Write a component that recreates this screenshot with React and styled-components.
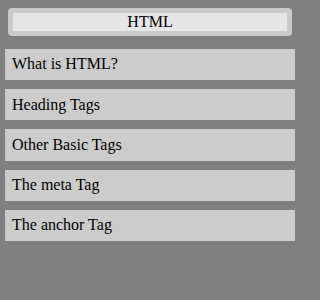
import React from 'react';
import styled, { createGlobalStyle } from 'styled-components';

const GlobalStyle = createGlobalStyle`
  html, body {
    margin: 0;
    padding: 0;
    background: #808080;
  }
  body {
    font-family: 'Liberation Serif', 'Times New Roman', serif;
    font-size: 16px;
  }
`;

const topics = [
  'What is HTML?',
  'Heading Tags',
  'Other Basic Tags',
  'The meta Tag',
  'The anchor Tag',
];

const App = () => (
  <>
    <GlobalStyle />
    <Page>
      <Title>HTML</Title>
      <TopicList>
        {topics.map(topic => (
          <Topic key={topic}>{topic}</Topic>
        ))}
      </TopicList>
    </Page>
  </>
);

export default App;

const Page = styled.div`
  width: 300px;
  height: 300px;
  box-sizing: border-box;
  padding: 8px 5px;
  background: #808080;
`;

const Title = styled.div`
  margin: 0 3px;
  border: 5px solid #cbcbcb;
  border-radius: 4px;
  background: #e6e6e6;
  color: #000;
  text-align: center;
  line-height: 18.4px;
`;

const TopicList = styled.div`
  display: flex;
  flex-direction: column;
  gap: 9px;
  margin-top: 12.6px;
`;

const Topic = styled.div`
  padding: 6.4px 7px;
  background: #cccccc;
  color: #000;
  line-height: 18.4px;
`;
